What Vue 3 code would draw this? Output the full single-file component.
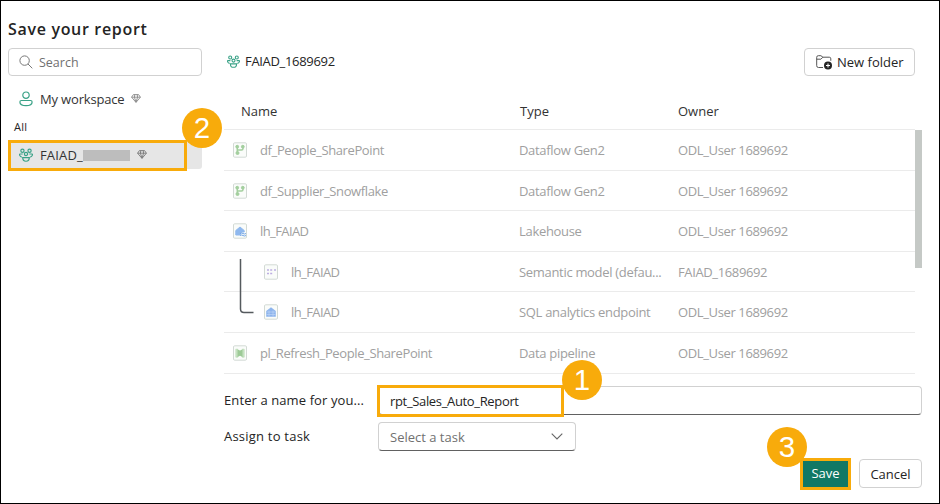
<script setup>
const people = [
  [3.2, 2.5, 1.5], [9.8, 2.5, 1.5], [6.5, 5.6, 1.5]
]
const rows = [
  { icon: 'flow', name: 'df_People_SharePoint', type: 'Dataflow Gen2', owner: 'ODL_User 1689692' },
  { icon: 'flow', name: 'df_Supplier_Snowflake', type: 'Dataflow Gen2', owner: 'ODL_User 1689692' },
  { icon: 'lake', name: 'lh_FAIAD', type: 'Lakehouse', owner: 'ODL_User 1689692', brief: true },
  { icon: 'model', name: 'lh_FAIAD', type: 'Semantic model (defau...', owner: 'FAIAD_1689692', child: true, brief: true },
  { icon: 'sql', name: 'lh_FAIAD', type: 'SQL analytics endpoint', owner: 'ODL_User 1689692', child: true, brief: true },
  { icon: 'pipe', name: 'pl_Refresh_People_SharePoint', type: 'Data pipeline', owner: 'ODL_User 1689692' }
]
</script>

<template>
  <div class="dialog">
    <aside class="side">
      <h1>Save your report</h1>
      <div class="search">
        <svg width="14" height="14" viewBox="0 0 14 14" fill="none" stroke="#777" stroke-width="1"><circle cx="5.6" cy="5.6" r="4.7" /><path d="M9 9l4.3 4.3" /></svg>
        <span>Search</span>
      </div>
      <div class="ws my">
        <svg width="14" height="16" viewBox="0 0 14 16" fill="none" stroke="#3aa287" stroke-width="1.2"><circle cx="7" cy="4.2" r="3.2" /><path d="M2.4 9.5h9.2q1.5 0 1.5 1.4c0 2.4-2.6 3.7-6.1 3.7S.9 13.3.9 10.9q0-1.4 1.5-1.4z" /></svg>
        <span>My workspace</span>
        <svg class="gem" width="10" height="9" viewBox="0 0 10 9" fill="none" stroke="#888" stroke-width=".9"><path d="M2.400.6h5.200L9.400 3.200 5 8.400.6 3.200zM.6 3.200h8.800M3.400 3.200L5 8.200l1.600-5M3.400 3.200L3.800.6M6.600 3.200L6.200.6" /></svg>
      </div>
      <div class="all">All</div>
      <div class="ws sel">
        <svg width="14" height="14" viewBox="0 0 13 13" fill="none" stroke="#3aa287" stroke-width="1.1"><circle v-for="(p, i) in people" :key="i" :cx="p[0]" :cy="p[1]" :r="p[2]" /><path d="M3.400 5.600H.8C.2 5.600.4 8 2.600 8.400M9.600 5.600h2.600c.6 0 .4 2.400-1.800 2.800M3.400 8.900h6.200c0 2.200-1.200 3.400-3.100 3.400S3.400 11.100 3.400 8.900z" /></svg>
        <span>FAIAD_</span><i class="redact"></i>
        <svg class="gem" width="10" height="9" viewBox="0 0 10 9" fill="none" stroke="#777" stroke-width=".9"><path d="M2.400.6h5.200L9.400 3.200 5 8.400.6 3.200zM.6 3.200h8.800M3.400 3.200L5 8.200l1.600-5M3.400 3.200L3.800.6M6.600 3.200L6.200.6" /></svg>
      </div>
    </aside>

    <main class="main">
      <div class="top">
        <svg class="team" width="13" height="13" viewBox="0 0 13 13" fill="none" stroke="#3aa287" stroke-width="1.1"><circle v-for="(p, i) in people" :key="i" :cx="p[0]" :cy="p[1]" :r="p[2]" /><path d="M3.400 5.600H.8C.2 5.600.4 8 2.600 8.400M9.600 5.600h2.600c.6 0 .4 2.400-1.800 2.800M3.400 8.900h6.200c0 2.200-1.200 3.400-3.100 3.400S3.400 11.100 3.400 8.900z" /></svg>
        <span class="crumb">FAIAD_1689692</span>
        <button class="btn folder">
          <svg width="17" height="15" viewBox="0 0 17 15" fill="none" stroke="#555" stroke-width="1"><path d="M7 12.500H2.500Q.7 12.500.7 10.700V2.300Q.7.700 2.300.7h2.600l2 1.500h6.400q1.500 0 1.500 1.600v2M.7 4.200h4.200l2-2" /><circle cx="12" cy="10.500" r="4" fill="#242424" stroke="none" /><path d="M12 8.500v4M10 10.500h4" stroke="#fff" /></svg>
          <span>New folder</span>
        </button>
      </div>

      <div class="row head">
        <span class="name">Name</span><span class="type-head">Type</span><span>Owner</span>
      </div>
      <div class="table">
        <div class="rows">
          <div v-for="(r, i) in rows" :key="i" class="row item">
            <div class="name" :class="{ child: r.child }">
              <svg width="14" height="16" viewBox="0 0 14 16" fill="none">
                <rect x=".5" y=".8" width="13" height="14.400" rx="1.200" fill="#fafcfa" stroke="#d3dad5" />
                <g v-if="r.icon === 'flow'" fill="#a3cf9e" stroke="#a3cf9e"><circle cx="4.200" cy="4.700" r="1.400" /><circle cx="9.800" cy="4.700" r="1.400" /><circle cx="4.500" cy="11" r="1.500" /><path d="M4.300 5v6M10 5v1.500Q10 8 8.500 8H4.500" stroke-width="1.500" fill="none" /></g>
                <g v-else-if="r.icon === 'lake'"><path d="M2.800 12V7.500L7 4l4.200 3.500V9H8.300l-1.300 3z" fill="#8fb8ee" stroke="#8fb8ee" /><path d="M7 10.500q1.500-1 3 0t3 0M7 12.500q1.500-1 3 0t3 0" stroke="#73a6e6" /></g>
                <path v-else-if="r.icon === 'model'" d="M3 6h2M6.200 6h2M10 6h2M3 9.500h2M6.200 9.500h2" stroke="#bdaee2" stroke-width="1.700" />
                <g v-else-if="r.icon === 'sql'"><path d="M2.200 12.700V7L7 3.200 11.800 7v5.700z" fill="#8db4ed" /><path d="M2.500 8h9M2.500 10.500h9M5 6.500v6M9 6.500v6" stroke="#c4d8f6" stroke-width=".6" /></g>
                <g v-else><path d="M2.800 4.200h2v8h-2zM9.200 4.200h2v8h-2z" fill="#c8e4c4" stroke="#b5d9b0" stroke-width=".6" /><path d="M4.500 4.500l2.500 1 2.500-1v7.500L7 10.800l-2.500 1.200z" fill="#9dca97" /></g>
              </svg>
              <span :class="{ brief: r.brief }">{{ r.name }}</span>
            </div>
            <span class="type">{{ r.type }}</span>
            <span class="owner">{{ r.owner }}</span>
          </div>
          <svg class="branch" width="16" height="56" viewBox="0 0 16 56" fill="none" stroke="#555a5e" stroke-width="1.500"><path d="M1.500 0v50q0 3.500 3.500 3.500h9.500" /></svg>
        </div>
        <div class="thumb"></div>
      </div>

      <div class="field f1">
        <label>Enter a name for you...</label>
        <div class="input report"><span>rpt_Sales_Auto_Report</span></div>
      </div>
      <div class="field f2">
        <label>Assign to task</label>
        <div class="input select"><span>Select a task</span>
          <svg width="12" height="7" viewBox="0 0 12 7" fill="none" stroke="#666" stroke-width="1.100"><path d="M.7.7L6 6 11.300.7" /></svg>
        </div>
      </div>
      <div class="actions">
        <button class="save">Save</button>
        <button class="btn cancel">Cancel</button>
      </div>
    </main>

    <div class="mark m-side"></div>
    <div class="mark m-name"></div>
    <div class="step s1">1</div>
    <div class="step s2">2</div>
    <div class="step s3">3</div>
  </div>
</template>

<style>
body { margin: 0; background: #fff; }
</style>
<style scoped>
* { box-sizing: border-box; }
.dialog { position: relative; width: 940px; height: 504px; border: 1px solid #000; display: flex; font: 13px/18px "Open Sans", "Noto Sans", sans-serif; color: #242424; background: #fff; overflow: hidden; white-space: nowrap; }
.side { width: 194px; margin-left: 7px; flex: none; }
h1 { margin: 17px 0 7px; font-size: 16px; line-height: 23px; font-weight: 600; letter-spacing: .68px; }
.search { height: 28px; border: 1px solid #d1d1d1; border-radius: 4px; display: flex; align-items: center; padding-left: 10px; gap: 6px; color: #707070; font-size: 12.500px; }
.search span { padding-top: 1px; }
.ws { display: flex; align-items: center; padding-left: 11px; height: 28px; color: #333; }
.my { margin-top: 9px; padding-bottom: 1px; letter-spacing: -.17px; }
.my span, .sel span { margin-left: 7px; }
.sel span { letter-spacing: .15px; }
.gem { margin-left: 7px; margin-top: -1px; }
.all { font-size: 11px; line-height: 16px; margin: 6px 0; padding-left: 6px; letter-spacing: .3px; }
.sel { background: #e6e6e6; border-radius: 0 0 3px 3px; }
.redact { width: 47px; height: 11px; background: #bdbdbd; }
.main { margin-left: 22px; width: 698px; flex: none; display: flex; flex-direction: column; }
.top { height: 28px; margin-top: 47px; display: flex; align-items: center; padding: 0 7px 0 3px; }
.team { margin-bottom: 2px; }
.crumb { margin-left: 5px; padding-bottom: 2px; letter-spacing: -.32px; }
button { font-family: inherit; font-size: 13px; line-height: 18px; padding: 0; }
.btn { background: #fff; border: 1px solid #d1d1d1; border-radius: 4px; color: #242424; }
.folder { margin-left: auto; width: 111px; height: 28px; display: flex; align-items: center; padding-left: 11px; gap: 4px; }
.row { display: grid; grid-template-columns: 295px 159px 1fr; align-items: center; width: 691px; border-bottom: 1px solid #ebebeb; }
.head { height: 54px; padding-top: 16px; color: #333; }
.head .name { padding-left: 17px; }
.type-head { padding-left: 1px; }
.table { display: flex; height: 244px; }
.rows { position: relative; width: 691px; display: grid; grid-template-rows: 41px 40px 41px 40px 41px 41px; }
.item { color: #a0a0a0; }
.item .name { display: flex; align-items: center; gap: 13px; padding-left: 9px; letter-spacing: -.38px; }
.item .brief { letter-spacing: -.6px; }
.item .child { padding-left: 40px; }
.type { letter-spacing: -.31px; }
.owner { letter-spacing: -.37px; }
.branch { position: absolute; left: 15px; top: 129px; }
.thumb { width: 7px; height: 138px; background: #c5c9c6; }
.field { display: flex; align-items: center; height: 29px; }
.field label { width: 154px; padding-bottom: 2px; }
.f1 { margin-top: 12px; }
.f1 label { letter-spacing: .1px; }
.f2 { margin-top: 7px; }
.f2 label { letter-spacing: .22px; }
.input { flex: 1; height: 29px; border: 1px solid #d1d1d1; border-bottom-color: #616161; border-radius: 4px; display: flex; align-items: center; padding-left: 11px; }
.report { letter-spacing: -.34px; }
.select { flex: none; width: 198px; justify-content: space-between; padding-right: 12px; color: #707070; }
.actions { display: flex; justify-content: flex-end; align-items: flex-start; margin-top: 7px; gap: 8px; }
.save { width: 51px; height: 32px; border: 3px solid #f8ab0b; background: #117865; color: #fff; padding-bottom: 2px; }
.cancel { width: 63px; height: 29px; margin-top: 1px; }
.mark { position: absolute; border: 3px solid #f8ab0b; }
.m-side { left: 7px; top: 139px; width: 179px; height: 31px; }
.m-name { left: 376px; top: 384px; width: 187px; height: 32px; }
.step { position: absolute; width: 40px; height: 40px; border-radius: 50%; background: #f8ab0b; color: #fff; font: 29.500px/40px "Liberation Sans", Arial, sans-serif; text-align: center; }
.s1 { left: 561px; top: 359px; }
.s2 { left: 181px; top: 107px; }
.s3 { left: 766px; top: 426px; }
</style>
